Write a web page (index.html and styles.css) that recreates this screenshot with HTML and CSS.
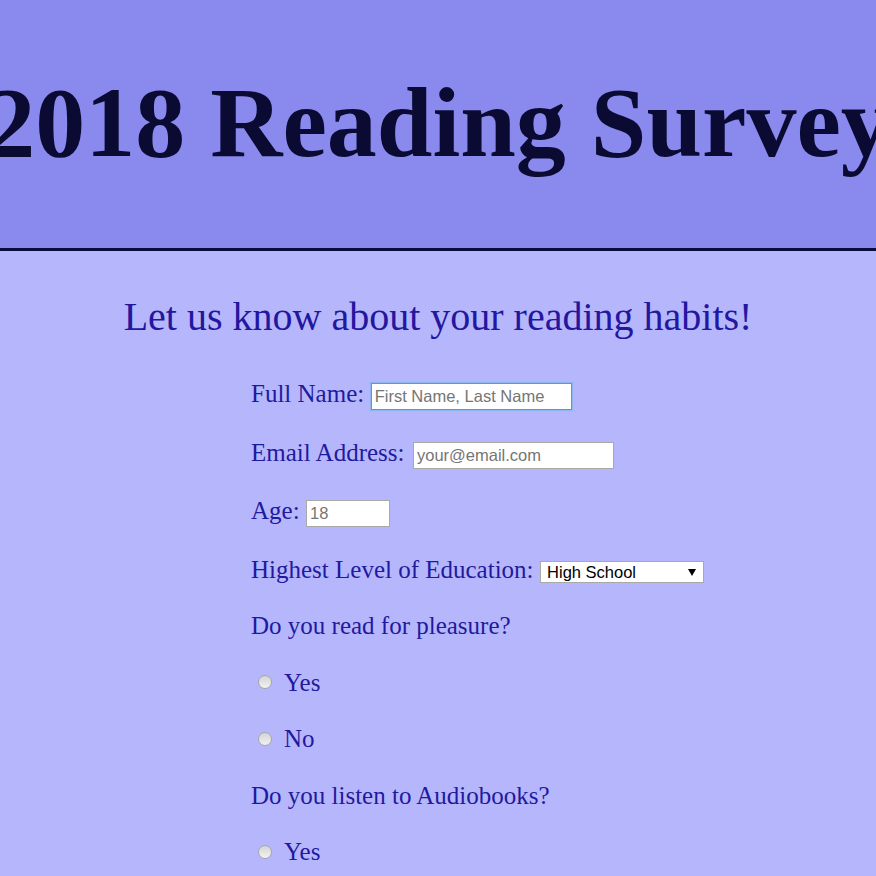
FILE: index.html
```html
<!DOCTYPE html>
<html lang="en">
<head>
<meta charset="utf-8">
<title>2018 Reading Survey</title>
<link rel="stylesheet" href="styles.css">
</head>
<body>
<header class="banner">
  <h1 class="title">2018 Reading Survey</h1>
</header>
<main class="content">
  <h2 class="tagline">Let us know about your reading habits!</h2>
  <form class="survey">
    <div class="row field">
      <label for="name">Full Name:</label>
      <input id="name" class="text-input wide focused" type="text" placeholder="First Name, Last Name">
    </div>
    <div class="row field">
      <label for="email">Email Address:</label>
      <input id="email" class="text-input wide shifted" type="email" placeholder="your@email.com">
    </div>
    <div class="row field">
      <label for="age">Age:</label>
      <input id="age" class="text-input narrow" type="number" placeholder="18">
    </div>
    <div class="row">
      <label for="edu">Highest Level of Education:</label>
      <span class="select-wrap">
        <select id="edu" class="select">
          <option>High School</option>
          <option>Some College</option>
          <option>Bachelor's Degree</option>
          <option>Graduate Degree</option>
        </select>
      </span>
    </div>
    <div class="row question">Do you read for pleasure?</div>
    <label class="row option"><input class="radio" type="radio" name="pleasure" value="yes"><span>Yes</span></label>
    <label class="row option"><input class="radio" type="radio" name="pleasure" value="no"><span>No</span></label>
    <div class="row question">Do you listen to Audiobooks?</div>
    <label class="row option"><input class="radio" type="radio" name="audio" value="yes"><span>Yes</span></label>
    <label class="row option"><input class="radio" type="radio" name="audio" value="no"><span>No</span></label>
  </form>
</main>
</body>
</html>
```
FILE: styles.css
```css
html {
  scrollbar-width: none;
}

body {
  margin: 0;
  background: #b6b6fc;
  font-family: "Liberation Serif", "Times New Roman", serif;
  color: #1f1a9e;
  overflow-x: hidden;
}

.banner {
  background: #8a8aee;
  border-bottom: 3px solid #0c0c3c;
  padding: 73px 0 75px;
}

.title {
  margin: 0;
  display: flex;
  justify-content: center;
  white-space: nowrap;
  font-size: 100px;
  line-height: 100px;
  font-weight: bold;
  color: #0a0a33;
}

.content {
  padding-top: 43px;
}

.tagline {
  margin: 0;
  text-align: center;
  font-size: 40px;
  line-height: 46px;
  font-weight: normal;
  color: #23169f;
}

.survey {
  margin: 39px 0 0 251px;
}

.row {
  display: flex;
  align-items: baseline;
  height: 29px;
  font-size: 25px;
  line-height: 29px;
  margin-bottom: 27.5px;
  white-space: nowrap;
}

.row.field {
  margin-bottom: 29.5px;
}

.text-input {
  box-sizing: border-box;
  height: 27px;
  margin: 0 0 0 6.5px;
  padding: 0 3px;
  border: 1px solid #a9a9a9;
  background: #fff;
  font-family: "Liberation Sans", Arial, sans-serif;
  font-size: 16.5px;
  color: #000;
  outline: none;
}

.text-input.shifted {
  margin-left: 8.5px;
}

.text-input::placeholder {
  color: #757575;
}

.text-input.wide {
  width: 201px;
}

.text-input.narrow {
  width: 84px;
  -moz-appearance: textfield;
}

.text-input.narrow::-webkit-inner-spin-button,
.text-input.narrow::-webkit-outer-spin-button {
  -webkit-appearance: none;
  margin: 0;
}

.text-input.focused {
  border-color: #5b93e6;
  box-shadow: 0 0 1px 1px #8fb6f2;
}

.select-wrap {
  position: relative;
  display: inline-flex;
  margin-left: 6.5px;
}

.select {
  -webkit-appearance: none;
  appearance: none;
  box-sizing: border-box;
  width: 164px;
  height: 22px;
  margin: 0;
  padding: 0 0 0 6px;
  border: 1px solid #a9a9a9;
  border-radius: 0;
  background: #fff;
  font-family: "Liberation Sans", Arial, sans-serif;
  font-size: 16.5px;
  color: #000;
}

.select-wrap::after {
  content: "";
  position: absolute;
  right: 8px;
  top: 8px;
  border-left: 4px solid transparent;
  border-right: 4px solid transparent;
  border-top: 7px solid #000;
  pointer-events: none;
}

.option {
  align-items: center;
}

.radio {
  -webkit-appearance: none;
  appearance: none;
  box-sizing: border-box;
  width: 14px;
  height: 14px;
  margin: 0 12px 0 7px;
  border: 1px solid #a6a6a6;
  border-radius: 50%;
  background: linear-gradient(#d4d4d4, #f2f2f2);
}
```
